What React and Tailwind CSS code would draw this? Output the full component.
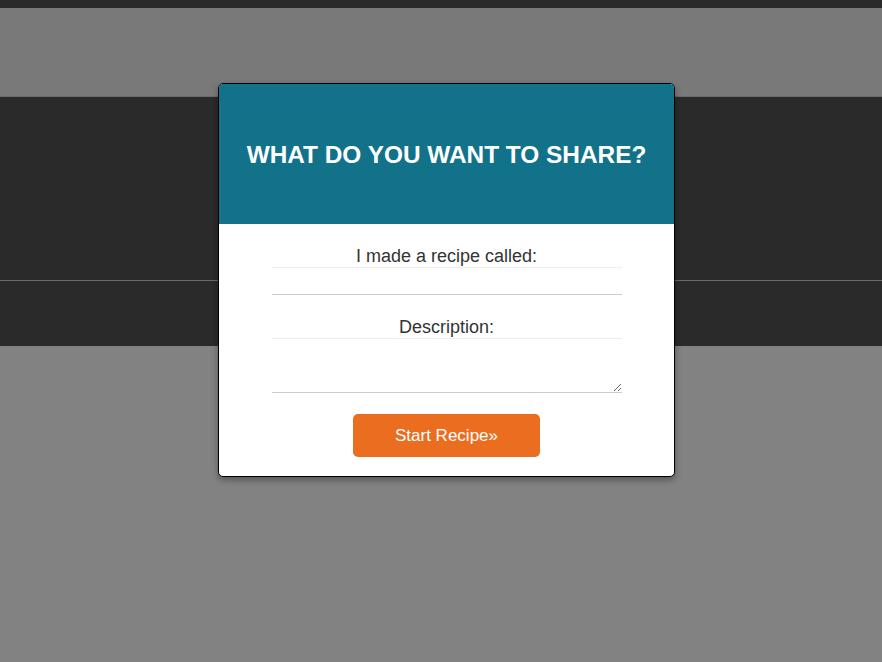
export default function App() {
  return (
    <div className="relative h-[662px] w-[882px] overflow-hidden bg-[#828282]" style={{ fontFamily: '"Liberation Sans", Arial, sans-serif' }}>
      <div className="h-[8px] bg-[#2a2a2a]" />
      <div className="h-[88px] bg-[#797979]" />
      <div className="h-px bg-[#6a6a6a]" />
      <div className="h-[183px] bg-[#2a2a2a]" />
      <div className="h-px bg-[#6a6a6a]" />
      <div className="h-[65px] bg-[#2a2a2a]" />

      <div className="absolute left-[218px] top-[83px] w-[457px] overflow-hidden rounded-[5px] border border-black bg-white shadow-[0_3px_6px_rgba(0,0,0,0.35)]">
        <div className="flex h-[140px] items-center justify-center bg-[#11728a] pt-[2px]">
          <h1 className="text-[24.4px] font-bold text-white">WHAT DO YOU WANT TO SHARE?</h1>
        </div>
        <div className="flex flex-col items-center pb-[19px] pt-[22px] text-[18px] text-[#333]">
          <label className="leading-[21px]">I made a recipe called:</label>
          <input type="text" className="h-[28px] w-[350px] border-t border-b border-t-[#eee] border-b-[#ccc] outline-none" />
          <label className="mt-[22px] leading-[21px]">Description:</label>
          <textarea className="h-[55px] w-[350px] border-t border-b border-t-[#eee] border-b-[#ccc] outline-none" />
          <button className="mt-[21px] h-[43px] w-[187px] rounded-[5px] bg-[#eb6d1f] text-[17px] text-white">Start Recipe»</button>
        </div>
      </div>
    </div>
  );
}
